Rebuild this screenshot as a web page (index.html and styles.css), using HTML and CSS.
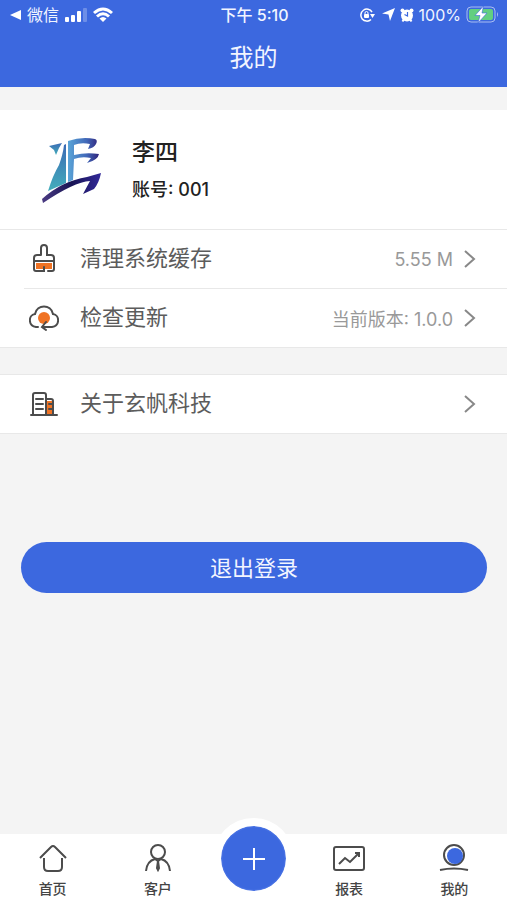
FILE: index.html
```html
<!DOCTYPE html>
<html lang="zh-CN">

<head>
  <meta charset="UTF-8" />
  <meta name="viewport" content="width=device-width, initial-scale=1" />
  <title>我的</title>
  <link rel="stylesheet" href="styles.css">
</head>

<body>
  <div class="layout">
    <header class="header">
      <div class="status-bar">
        <div class="status-left">
          <svg width="11" height="12" viewBox="0 0 11 12"><path d="M0 6 11 1v10z" fill="#fff" /></svg>
          <span>微信</span>
          <svg class="signal" width="22" height="14" viewBox="0 0 22 14" fill="#fff">
            <rect x="0" y="9" width="4" height="5" rx="1" />
            <rect x="6" y="7" width="4" height="7" rx="1" />
            <rect x="12" y="3" width="4" height="11" rx="1" />
            <rect x="18" y="0" width="4" height="14" rx="1" opacity=".25" />
          </svg>
          <svg width="20" height="15" viewBox="0 0 20 15" fill="none" stroke="#fff" stroke-width="3">
            <path d="M1 6Q10-2 19 6M4 9.500Q10 4 16 9.500" />
            <path d="M6.500 11.500Q10 8.500 13.500 11.500L10 15z" fill="#fff" stroke="none" />
          </svg>
        </div>
        <div class="status-time">下午 5:10</div>
        <div class="status-right">
          <svg width="15" height="14" viewBox="0 0 15 14">
            <path d="M12 4A6 6 0 1 0 11 11.500" fill="none" stroke="#fff" stroke-width="1.500" />
            <path d="M10 6h5l-2.500 4z" fill="#fff" />
            <rect x="4" y="6" width="5" height="4" rx="1" fill="#fff" />
            <path d="M5 6.500V5a1.500 1.500 0 0 1 3 0v1.500" fill="none" stroke="#fff" />
          </svg>
          <svg width="13" height="13" viewBox="0 0 13 13"><path d="M13 0 8 13 6.500 6.500 0 5.500z" fill="#fff" /></svg>
          <svg width="14" height="14" viewBox="0 0 14 14">
            <circle cx="2.500" cy="2.500" r="2" fill="#fff" />
            <circle cx="11.500" cy="2.500" r="2" fill="#fff" />
            <circle cx="7" cy="7.500" r="6" fill="#fff" />
            <path d="M2.500 13.500 4 11M11.500 13.500 10 11" stroke="#fff" stroke-width="2" />
            <path d="M7.500 4v4l-3-1.500" fill="none" stroke="#3c68df" stroke-width="1.200" />
          </svg>
          <span>100%</span>
          <svg class="battery" width="33" height="17" viewBox="0 0 33 17">
            <rect x="1" y="1" width="28" height="15" rx="4" fill="none" stroke="#a9bdf2" />
            <rect x="3" y="3" width="24" height="11" rx="2" fill="#62cf80" />
            <path d="M31 6q2 2.500 0 5z" fill="#a9bdf2" />
            <path d="M17.500 0 9 9.500h5L12 17l9-10h-5z" fill="#fff" stroke="#3c68df" stroke-width=".6" />
          </svg>
        </div>
      </div>
      <h1>我的</h1>
    </header>

    <main class="content">
      <section class="profile">
        <svg class="avatar" width="62" height="68" viewBox="0 0 62 68">
          <defs>
            <linearGradient id="sail" x1="0" y1="0" x2="0" y2="1">
              <stop offset="0" stop-color="#3b6ab5" />
              <stop offset="1" stop-color="#43aebb" />
            </linearGradient>
            <linearGradient id="flag" x1="0" y1="0" x2="1" y2="0">
              <stop offset="0" stop-color="#5aa5d8" />
              <stop offset=".6" stop-color="#4168b8" />
              <stop offset="1" stop-color="#30247c" />
            </linearGradient>
            <linearGradient id="wave" x1="0" y1="0" x2="1" y2="0">
              <stop offset="0" stop-color="#4b3b83" />
              <stop offset=".5" stop-color="#181354" />
              <stop offset="1" stop-color="#322999" />
            </linearGradient>
          </defs>
          <path d="M9 10 22 7 19 12 16 19 14 14z" fill="url(#sail)" />
          <path d="M24 9 26 8V47L8 55Q13 39 19 29 23 18 24 9z" fill="url(#sail)" />
          <path d="M28 5Q42 0 55 3 58 4 56 8 54 12 48 13L50 8Q41 6 34 9V19Q46 16 59 18 58 24 47 27L51 22Q42 20 34 23L33 44 28 46z" fill="url(#flag)" />
          <path d="M2 63Q22 45 47 41L61 37Q59 47 54 53L43 58 50 45Q34 46 3 67z" fill="url(#wave)" />
        </svg>
        <div class="profile-info">
          <div class="profile-name">李四</div>
          <div class="profile-account">账号: 001</div>
        </div>
      </section>

      <nav class="menu">
        <a class="menu-item" href="#cache">
          <svg class="menu-icon" viewBox="0 0 30 30">
            <path d="M7 19h16v6H7z" fill="#f07324" stroke="none" />
            <path d="M12 11V4q0-3 3-3t3 3v7h4q3 0 3 3v11q0 2-2 2h-4M12 11H8q-3 0-3 3v11q0 2 2 2h8v-4M5 17h20" />
          </svg>
          <span class="menu-label">清理系统缓存</span>
          <span class="menu-value">5.55 M</span>
          <svg class="arrow" viewBox="0 0 12 20"><path d="m1 2 9 8-9 8" /></svg>
        </a>
        <a class="menu-item" href="#update">
          <svg class="menu-icon" viewBox="0 0 30 30">
            <circle cx="15" cy="15" r="6" fill="#f07324" stroke="none" />
            <path d="M9 24H7C-1 23-1 12 6 11 8 1 22 1 24 11c7 1 7 12-1 13h-9M17 19l-4 5 4 3" />
          </svg>
          <span class="menu-label">检查更新</span>
          <span class="menu-value">当前版本: 1.0.0</span>
          <svg class="arrow" viewBox="0 0 12 20"><path d="m1 2 9 8-9 8" /></svg>
        </a>
      </nav>

      <nav class="menu menu-about">
        <a class="menu-item" href="#about">
          <svg class="menu-icon" viewBox="0 0 30 30">
            <path d="M17 12h7v14h-7z" fill="#f07324" stroke="none" />
            <path d="M2 26h26M4 26V6q0-2 2-2h9q2 0 2 2v20M7 10h7M7 15h7M7 20h7M17 10h5q2 0 2 2v14M20 15h3M20 20h3" />
          </svg>
          <span class="menu-label">关于玄帆科技</span>
          <svg class="arrow" viewBox="0 0 12 20"><path d="m1 2 9 8-9 8" /></svg>
        </a>
      </nav>

      <button type="button" class="logout-btn">退出登录</button>
    </main>

    <nav class="tab-bar">
      <a class="tab" href="#home">
        <svg class="tab-icon" viewBox="0 0 32 28">
          <path d="M3 14 14 3q2-2 4 0l11 11M7 14v9q0 4 4 4h10q4 0 4-4v-9" />
        </svg>
        <span>首页</span>
      </a>
      <a class="tab" href="#customer">
        <svg class="tab-icon" viewBox="0 0 32 28">
          <circle cx="16" cy="8" r="7" />
          <path d="M4 27q1-10 9-12l3 2 3-2q8 2 9 12M16 17l-1 7 1 2 1-2z" />
        </svg>
        <span>客户</span>
      </a>
      <div class="tab-center">
        <button type="button" class="add-btn" aria-label="新增">
          <svg width="22" height="22" viewBox="0 0 22 22"><path d="M11 0v22M0 11h22" stroke="#fff" stroke-width="2" /></svg>
        </button>
      </div>
      <a class="tab" href="#report">
        <svg class="tab-icon" viewBox="0 0 32 28">
          <rect x="1" y="3" width="30" height="23" rx="2" />
          <path d="m6 20 6-6 5 4 8-8M22 9h4v4" />
        </svg>
        <span>报表</span>
      </a>
      <a class="tab" href="#mine">
        <svg class="tab-icon" viewBox="0 0 32 28">
          <circle cx="16" cy="11" r="10" />
          <circle cx="17" cy="12" r="8" fill="#3c68df" stroke="none" />
          <path d="M2 26q14-3 28 0" />
        </svg>
        <span>我的</span>
      </a>
    </nav>
  </div>
</body>

</html>
```
FILE: styles.css
```css
body,
html {
  margin: 0;
  padding: 0;
  font-family: Inter, 'Noto Sans CJK SC', sans-serif;
  background: #f4f4f4;
  color: #222;
}

a {
  color: inherit;
  text-decoration: none;
}

svg {
  flex: none;
}

.layout {
  display: flex;
  flex-direction: column;
  min-height: 100vh;
}

.header {
  background: #3c68df;
  color: #f2f5ff;
  height: 87px;
}

.status-bar {
  display: grid;
  grid-template-columns: 1fr auto 1fr;
  align-items: center;
  height: 29px;
  padding: 0 8px 0 10px;
  font-size: 16px;
  line-height: 28px;
}

.status-left,
.status-right {
  display: flex;
  align-items: center;
  gap: 6px;
}

.status-right {
  justify-content: flex-end;
  gap: 5px;
}

.status-right svg:first-child {
  margin-right: 2px;
}

.status-time {
  font-weight: 500;
}

h1 {
  margin: 0;
  font-size: 24px;
  font-weight: 400;
  line-height: 58px;
  text-align: center;
}

.content {
  flex: 1;
  display: flex;
  flex-direction: column;
  padding-top: 23px;
}

.profile {
  display: flex;
  align-items: center;
  gap: 30px;
  height: 119px;
  padding: 0 40px;
  background: #fff;
}

.profile-name {
  font-size: 23px;
  font-weight: 500;
  line-height: 40px;
}

.profile-account {
  font-size: 18px;
  font-weight: 500;
  line-height: 36px;
}

.menu {
  background: #fff;
  border-top: 1px solid #e8e8e8;
  border-bottom: 1px solid #e8e8e8;
}

.menu-about {
  margin-top: 26px;
}

.menu-item {
  display: flex;
  align-items: center;
  height: 58px;
  margin-left: 24px;
  padding: 0 31px 0 5px;
}

.menu-item + .menu-item {
  border-top: 1px solid #e8e8e8;
}

.menu-icon {
  width: 30px;
  height: 30px;
  margin-right: 21px;
  fill: none;
  stroke: #4c4c4c;
  stroke-width: 2;
  stroke-linecap: round;
}

.menu-label {
  flex: 1;
  font-size: 22px;
  line-height: 30px;
  padding-bottom: 2px;
  color: #5c5c5c;
}

.menu-value {
  margin-right: 11px;
  font-size: 18px;
  color: #999;
}

.arrow {
  width: 12px;
  height: 20px;
  fill: none;
  stroke: #888;
  stroke-width: 2;
}

.logout-btn {
  height: 51px;
  margin: 108px 20px 40px 21px;
  padding: 0 0 4px;
  border: none;
  border-radius: 26px;
  background: #3c68df;
  color: #f2f5ff;
  font-family: inherit;
  font-size: 22px;
  cursor: pointer;
}

.tab-bar {
  display: flex;
  height: 66px;
  background: #fff;
}

.tab {
  flex: 1;
  display: flex;
  flex-direction: column;
  align-items: center;
  padding-top: 10px;
  font-size: 14px;
  font-weight: 500;
  line-height: 20px;
  color: #444;
}

.tab-icon {
  width: 32px;
  height: 28px;
  margin-bottom: 7px;
  fill: none;
  stroke: #4c4c4c;
  stroke-width: 2;
}

.tab-center {
  width: 86px;
  display: flex;
  justify-content: center;
}

.add-btn {
  display: flex;
  align-items: center;
  justify-content: center;
  flex: none;
  box-sizing: content-box;
  width: 65px;
  height: 65px;
  margin-top: -16px;
  padding: 0;
  border: 8px solid #fff;
  border-radius: 50%;
  background: #3c68df;
  background-clip: padding-box;
  box-shadow: inset 0 0 2px #7c9cf5;
  cursor: pointer;
}
```
